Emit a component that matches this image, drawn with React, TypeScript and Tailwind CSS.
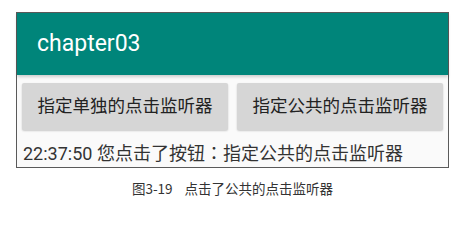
export default function App() {
  return (
    <div className="w-[465px] h-[202px] bg-white pt-[12px] pl-[16px] font-['Roboto','Noto_Sans_CJK_SC',sans-serif]">
      {/* Phone screen */}
      <div className="w-[433px] h-[156px] border border-[#5a5a5a] bg-[#fafafa] flex flex-col">
        <div className="h-[62px] bg-[#00857a] flex items-center pl-[20px] shadow-[0_2px_3px_rgba(0,0,0,0.18)] relative">
          <span className="text-white text-[23px] leading-none -mt-[2px]">chapter03</span>
        </div>

        <div className="flex gap-[9px] px-[5px] pt-[8px]">
          <button className="flex-1 h-[47px] bg-[#d6d6d6] rounded-[2px] shadow-[0_1px_2px_rgba(0,0,0,0.2)] text-[17.5px] text-[#222] leading-none">
            指定单独的点击监听器
          </button>
          <button className="flex-1 h-[47px] bg-[#d6d6d6] rounded-[2px] shadow-[0_1px_2px_rgba(0,0,0,0.2)] text-[17.5px] text-[#222] leading-none">
            指定公共的点击监听器
          </button>
        </div>

        <div className="pl-[6px] pt-[13px] text-[18px] text-[#333] leading-none">
          22:37:50 您点击了按钮<span className="font-['Noto_Sans_CJK_TC',sans-serif]">：</span>指定公共的点击监听器
        </div>
      </div>

      {/* Caption */}
      <div className="w-[433px] mt-[14px] flex justify-center text-[13.5px] text-[#333] leading-none font-['Noto_Sans_CJK_SC',sans-serif]">
        <span>图3-19</span>
        <span className="ml-[12px]">点击了公共的点击监听器</span>
      </div>
    </div>
  )
}
